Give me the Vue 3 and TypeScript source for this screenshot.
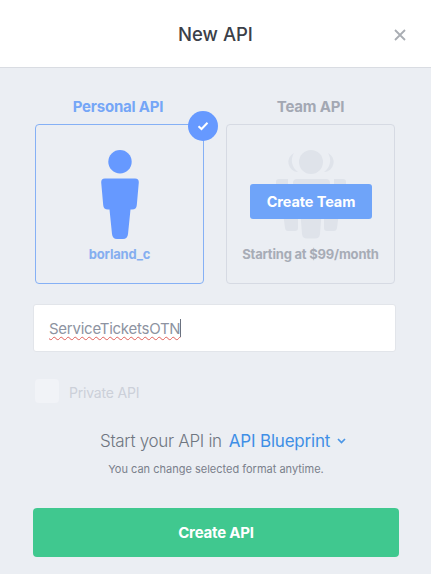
<script setup lang="ts">
const title: string = 'New API'
</script>

<template>
  <div class="page">
    <header class="head">
      <h1 class="title">{{ title }}</h1>
      <svg class="close" width="12" height="12" viewBox="0 0 12 12">
        <path d="M1 1 L11 11 M11 1 L1 11" stroke="#a9adb3" stroke-width="1.8" fill="none" />
      </svg>
    </header>
    <main class="body">
      <div class="plans">
        <section class="plan">
          <div class="plan-name active">Personal API</div>
          <div class="card card-active">
            <span class="badge">
              <svg width="12" height="10" viewBox="0 0 12 10">
                <path d="M1.5 5.2 L4.5 8 L10.5 1.8" stroke="#fff" stroke-width="2" fill="none" />
              </svg>
            </span>
            <svg class="person" width="38" height="90" viewBox="0 0 38 90">
              <circle cx="19" cy="11.7" r="11.7" fill="#6699ff" />
              <path d="M4 28.500 H34 Q38 28.500 37.800 32.500 L35.800 55 Q35.500 59.500 31 59.500 H29.500 L27 84 Q26.500 89 22 89 H16 Q11.500 89 11 84 L8.500 59.500 H7 Q2.500 59.500 2.200 55 L0.200 32.500 Q0 28.500 4 28.500 Z" fill="#6699ff" />
            </svg>
            <div class="card-label label-active">borland_c</div>
          </div>
        </section>
        <section class="plan">
          <div class="plan-name">Team API</div>
          <div class="card">
            <svg class="people" width="70" height="90" viewBox="0 0 70 90">
              <g fill="#dfe3ea">
                <g>
                  <path d="M18 3 A10 10 0 0 0 22 22 A14 14 0 0 1 18 3 Z" />
                  <path d="M3 29 H12 V40 L22 60 V78 Q22 81 19 81 H12 Q9.500 81 9 78 L6 55 H3 Q0 55 0 50 V32 Q0 29 3 29 Z" />
                </g>
                <g transform="matrix(-1 0 0 1 70 0)">
                  <path d="M18 3 A10 10 0 0 0 22 22 A14 14 0 0 1 18 3 Z" />
                  <path d="M3 29 H12 V40 L22 60 V78 Q22 81 19 81 H12 Q9.500 81 9 78 L6 55 H3 Q0 55 0 50 V32 Q0 29 3 29 Z" />
                </g>
                <circle cx="35" cy="12" r="12" />
                <path d="M21 29 H50 Q54 29 54 33 L51 58 H46 L44 84 Q43.500 88.500 39 88.500 H31 Q26.500 88.500 26 84 L24 58 H19 L17 33 Q17 29 21 29 Z" />
              </g>
            </svg>
            <button class="team-btn" type="button">Create Team</button>
            <div class="card-label">Starting at $99/month</div>
          </div>
        </section>
      </div>
      <div class="field"><span class="typed">ServiceTicketsOTN</span><i class="caret"></i></div>
      <div class="private">
        <span class="box"></span>
        <span class="private-text">Private API</span>
      </div>
      <p class="start">
        <span>Start your API in</span>
        <span class="format">API Blueprint</span>
        <svg class="chev" width="9" height="6" viewBox="0 0 9 6">
          <path d="M1 1 L4.500 4.500 L8 1" stroke="#4b96e6" stroke-width="1.700" fill="none" />
        </svg>
      </p>
      <p class="hint">You can change selected format anytime.</p>
      <button class="create" type="button">Create API</button>
    </main>
  </div>
</template>

<style>
html, body { margin: 0; background: #ebeef3; }
</style>

<style scoped>
.page {
  width: 431px;
  height: 574px;
  overflow: hidden;
  background: #ebeef3;
  font-family: "Inter", "Liberation Sans", sans-serif;
  display: flex;
  flex-direction: column;
}
.head {
  height: 67px;
  flex: none;
  background: #fff;
  border-bottom: 1px solid #d9dce2;
  position: relative;
  display: flex;
  align-items: center;
  justify-content: center;
}
.title {
  margin: 0;
  font-size: 18.500px;
  font-weight: 500;
  color: #3b4048;
}
.close { position: absolute; left: 394px; top: 29px; }
.body {
  padding: 0 32px 0 33px;
  display: flex;
  flex-direction: column;
}
.plans {
  display: flex;
  gap: 22px;
  padding: 30px 1px 0 2px;
}
.plan { width: 169px; }
.plan-name {
  text-align: center;
  font-size: 15px;
  font-weight: 700;
  line-height: 18px;
  color: #a3a8b3;
  margin-bottom: 8px;
  letter-spacing: -0.2px;
}
.plan-name.active { color: #75a6f7; margin-left: -3px; }
.card {
  position: relative;
  box-sizing: border-box;
  height: 160px;
  border: 1px solid #d6dae3;
  border-radius: 4px;
  display: flex;
  flex-direction: column;
  align-items: center;
  padding-top: 25px;
}
.card-active { border-color: #85b0f5; }
.badge {
  position: absolute;
  right: -15px;
  top: -14px;
  width: 30px;
  height: 30px;
  border-radius: 50%;
  background: #6699ff;
  display: flex;
  align-items: center;
  justify-content: center;
}
.card-label {
  margin-top: 6px;
  font-size: 13px;
  font-weight: 700;
  line-height: 16px;
  color: #a7acb6;
  letter-spacing: -0.2px;
  white-space: nowrap;
}
.label-active { color: #85aef0; }
.person, .people { display: block; }
.team-btn {
  position: absolute;
  left: 23px;
  top: 59px;
  width: 122px;
  height: 35px;
  border: 0;
  border-radius: 3px;
  background: #6fa4f9;
  color: #fff;
  font: 700 14.500px "Inter", "Liberation Sans", sans-serif;
  letter-spacing: -0.1px;
  padding: 0;
}
.field {
  margin-top: 20px;
  width: 363px;
  height: 48px;
  box-sizing: border-box;
  background: #fff;
  border: 1px solid #e2e5ea;
  border-radius: 3px;
  padding-left: 15px;
  display: flex;
  align-items: center;
  font-size: 15px;
  color: #8d93a1;
  letter-spacing: -0.25px;
}
.typed {
  text-decoration: underline wavy #e0605a 1px;
  text-underline-offset: 2px;
}
.caret {
  width: 1px;
  height: 18px;
  background: #6b7280;
}
.private {
  margin-top: 27px;
  margin-left: 2px;
  display: flex;
  align-items: center;
  gap: 10px;
}
.box {
  width: 24px;
  height: 24px;
  border-radius: 4px;
  background: #f1f3f7;
}
.private-text {
  font-size: 14px;
  color: #ccd0d9;
  letter-spacing: -0.2px;
  padding-top: 2px;
}
.start {
  margin: 26px 0 0;
  padding-left: 67px;
  display: flex;
  align-items: center;
  gap: 7px;
  font-size: 17px;
  font-weight: 300;
  line-height: 24px;
  color: #6f7681;
  letter-spacing: -0.3px;
}
.format { color: #3f8fe6; font-weight: 400; letter-spacing: -0.2px; }
.hint {
  margin: 9px 0 0;
  text-align: center;
  font-size: 11px;
  line-height: 14px;
  color: #7a808b;
}
.create {
  margin-top: 32px;
  width: 366px;
  height: 49px;
  border: 0;
  border-radius: 4px;
  background: #40c88f;
  color: #fff;
  font: 700 15px "Inter", "Liberation Sans", sans-serif;
  letter-spacing: -0.2px;
  padding: 0;
}
</style>
